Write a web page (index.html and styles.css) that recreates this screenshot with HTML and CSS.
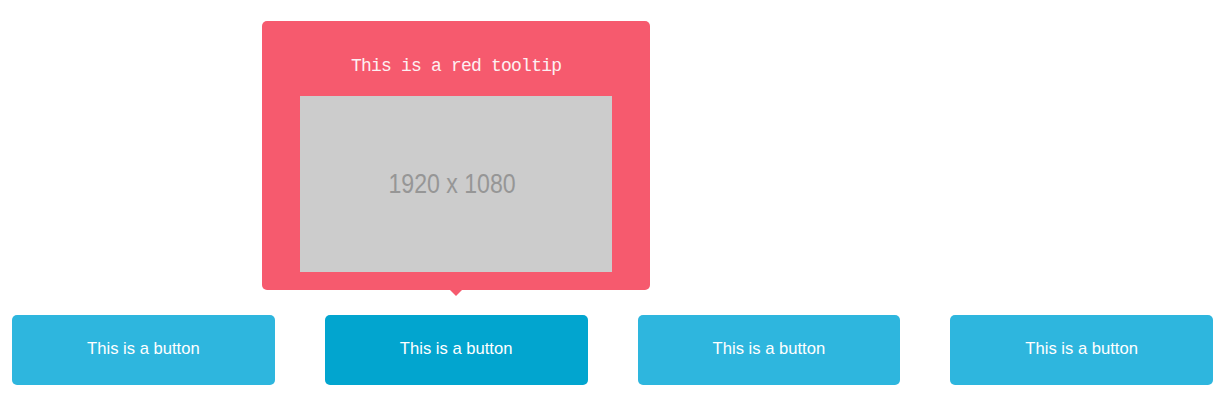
FILE: index.html
```html
<!DOCTYPE html>
<html>
<head>
<meta charset="utf-8">
<link rel="stylesheet" href="styles.css">
</head>
<body>
<div class="page">
  <div class="row">
    <div class="cell"><button class="btn">This is a button</button></div>
    <div class="cell">
      <div class="tooltip">
        <div class="tip-title">This is a red tooltip</div>
        <div class="placeholder"><span class="ph-text">1920 x 1080</span></div>
      </div>
      <button class="btn btn-active">This is a button</button>
    </div>
    <div class="cell"><button class="btn">This is a button</button></div>
    <div class="cell"><button class="btn">This is a button</button></div>
  </div>
</div>
</body>
</html>
```

FILE: styles.css
```css
html, body {
  margin: 0;
  padding: 0;
  background: #ffffff;
}
.page {
  padding: 315px 11px 0 12px;
}
.row {
  display: grid;
  grid-template-columns: repeat(4, 1fr);
  column-gap: 50px;
}
.cell {
  position: relative;
}
.btn {
  display: block;
  width: 100%;
  height: 70px;
  border: 0;
  border-radius: 5px;
  background: #2eb6de;
  color: #ffffff;
  font-family: "Liberation Sans", Arial, sans-serif;
  font-size: 16.6px;
  padding: 0 0 2px;
  margin: 0;
}
.btn-active {
  background: #02a5cf;
}
.tooltip {
  position: absolute;
  left: 50%;
  bottom: calc(100% + 25px);
  transform: translateX(-50%);
  width: 388px;
  box-sizing: border-box;
  padding: 33px 38px 18px;
  background: #f65a6e;
  border-radius: 5px;
}
.tooltip::after {
  content: "";
  position: absolute;
  left: 50%;
  top: 100%;
  margin-left: -6px;
  border-left: 6px solid transparent;
  border-right: 6px solid transparent;
  border-top: 6px solid #f65a6e;
}
.tip-title {
  font-family: "Liberation Mono", "Courier New", monospace;
  font-size: 18px;
  letter-spacing: -0.8px;
  line-height: 24px;
  color: #fdf0f2;
  text-align: center;
  margin-bottom: 18px;
}
.placeholder {
  width: 312px;
  height: 176px;
  background: #cccccc;
  display: flex;
  align-items: center;
  justify-content: center;
}
.ph-text {
  display: inline-block;
  font-family: "Liberation Sans", Arial, sans-serif;
  font-size: 28px;
  color: #969696;
  transform: translateX(-4px) scaleX(0.825);
}
```
